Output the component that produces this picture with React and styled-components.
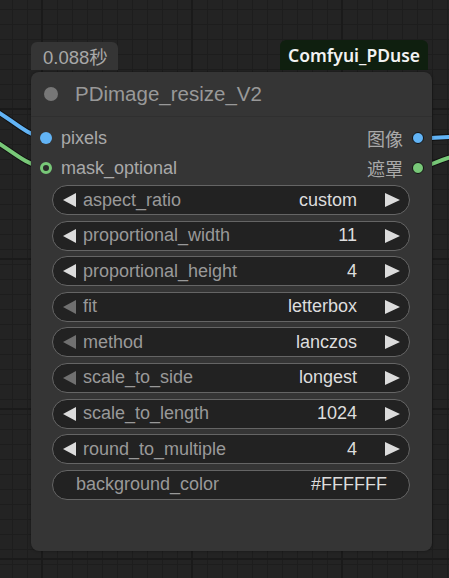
import React from 'react';
import styled, { createGlobalStyle } from 'styled-components';

const GlobalStyle = createGlobalStyle`
  html, body {
    margin: 0;
    padding: 0;
    background-color: #222;
  }
  * {
    box-sizing: border-box;
  }
`;

const Canvas = styled.div`
  position: relative;
  width: 449px;
  height: 578px;
  overflow: hidden;
  padding: 40px 17px 0 31px;
  font-family: "Liberation Sans", Arial, sans-serif;
  background-color: #232323;
  background-image:
    linear-gradient(to right, #1a1a1a 2px, transparent 2px),
    linear-gradient(to bottom, #1a1a1a 2px, transparent 2px),
    linear-gradient(to right, #1d1d1d 1px, transparent 1px),
    linear-gradient(to bottom, #1d1d1d 1px, transparent 1px);
  background-size: 150px 150px, 150px 150px, 15px 15px, 15px 15px;
  background-position: 41px 0, 0 108px, 12px 0, 0 9px;
`;

const Wires = styled.svg`
  position: absolute;
  left: 0;
  top: 0;
  width: 449px;
  height: 578px;
  pointer-events: none;
`;

const BadgeRow = styled.div`
  position: relative;
  display: flex;
  justify-content: space-between;
  align-items: flex-end;
  width: 401px;
  padding-right: 4px;
`;

const TimeBadge = styled.div`
  height: 28px;
  padding: 0 10px 0 12px;
  display: flex;
  align-items: center;
  background: #353535;
  border-radius: 6px 6px 0 0;
  color: #a8a8a8;
  font-size: 18.5px;
  font-family: "Liberation Sans", "Noto Sans CJK SC", sans-serif;
`;

const PackBadge = styled.div`
  height: 30px;
  padding: 0 8px;
  display: flex;
  align-items: center;
  background: #0f1f0f;
  border-radius: 6px 6px 0 0;
  color: #f2f2f2;
  font-size: 17.5px;
  font-weight: 600;
  font-family: "Noto Sans", sans-serif;
`;

const Node = styled.div`
  position: relative;
  margin-top: 2px;
  width: 401px;
  height: 479px;
  background: #353535;
  border-radius: 8px;
  box-shadow: 0 0 3px rgba(0, 0, 0, 0.4);
`;

const Title = styled.div`
  height: 45px;
  display: flex;
  align-items: center;
  gap: 17px;
  padding-left: 13px;
  border-bottom: 1px solid #2f2f2f;
  color: #999;
  font-size: 20.5px;
`;

const TitleDot = styled.span`
  width: 14px;
  height: 14px;
  border-radius: 50%;
  background: #777;
`;

const Slots = styled.div`
  padding: 6px 0 2px;
`;

const SlotRow = styled.div`
  height: 30px;
  display: flex;
  align-items: center;
  justify-content: space-between;
  padding: 0 8px 0 9px;
  color: #a9a9a9;
  font-size: 18px;
  font-family: "Liberation Sans", "Noto Sans CJK SC", sans-serif;
`;

const SlotSide = styled.div`
  display: flex;
  align-items: center;
  gap: 9px;
`;

const SlotDot = styled.span`
  width: 12px;
  height: 12px;
  border-radius: 50%;
  background: ${({ ring, color }) => (ring ? '#2a2a2a' : color)};
  border: ${({ ring, color, outlined }) =>
    ring ? `3px solid ${color}` : outlined ? '1px solid #111' : 'none'};
`;

const WidgetList = styled.div`
  display: flex;
  flex-direction: column;
  gap: 5.6px;
  padding: 0 22px 0 21px;
`;

const Widget = styled.div`
  height: 30px;
  display: flex;
  align-items: center;
  background: #222;
  border: 1px solid #656565;
  border-radius: 15px;
  padding: ${({ plain }) => (plain ? '0 22px 0 23px' : '0 9px 0 10px')};
  font-size: 18px;
`;

const Arrow = styled.span`
  width: 0;
  height: 0;
  border-top: 7px solid transparent;
  border-bottom: 7px solid transparent;
  ${({ dir, dim }) =>
    dir === 'left'
      ? `border-right: 13px solid ${dim ? '#707070' : '#dcdcdc'};`
      : `border-left: 15px solid #dcdcdc;`}
`;

const Label = styled.span`
  flex: 1;
  margin-left: ${({ plain }) => (plain ? '0' : '7px')};
  color: #999;
`;

const Value = styled.span`
  color: #ddd;
  margin-right: ${({ plain }) => (plain ? '0' : '28px')};
`;

const widgets = [
  { label: 'aspect_ratio', value: 'custom' },
  { label: 'proportional_width', value: '11' },
  { label: 'proportional_height', value: '4' },
  { label: 'fit', value: 'letterbox', dim: true },
  { label: 'method', value: 'lanczos', dim: true },
  { label: 'scale_to_side', value: 'longest', dim: true },
  { label: 'scale_to_length', value: '1024' },
  { label: 'round_to_multiple', value: '4' },
];

const Wire = ({ d, color }) => (
  <g fill="none" strokeLinecap="round">
    <path d={d} stroke="#111" strokeWidth="6" />
    <path d={d} stroke={color} strokeWidth="4" />
  </g>
);

const App = () => (
  <>
    <GlobalStyle />
    <Canvas>
      <Wires viewBox="0 0 449 578">
        <Wire d="M -20 102 C 10 116, 20 132, 45 139" color="#62b4f6" />
        <Wire d="M -20 132 C 10 148, 20 162, 45 169" color="#78c878" />
        <Wire d="M 418 139 C 430 138, 440 137, 470 136" color="#62b4f6" />
        <Wire d="M 418 169 C 432 165, 442 158, 470 152" color="#78c878" />
      </Wires>
      <BadgeRow>
        <TimeBadge>0.088秒</TimeBadge>
        <PackBadge>Comfyui_PDuse</PackBadge>
      </BadgeRow>
      <Node>
        <Title>
          <TitleDot />
          PDimage_resize_V2
        </Title>
        <Slots>
          <SlotRow>
            <SlotSide>
              <SlotDot color="#62b4f6" />
              pixels
            </SlotSide>
            <SlotSide>
              图像
              <SlotDot color="#62b4f6" outlined />
            </SlotSide>
          </SlotRow>
          <SlotRow>
            <SlotSide>
              <SlotDot color="#78c878" ring />
              mask_optional
            </SlotSide>
            <SlotSide>
              遮罩
              <SlotDot color="#78c878" outlined />
            </SlotSide>
          </SlotRow>
        </Slots>
        <WidgetList>
          {widgets.map((w) => (
            <Widget key={w.label}>
              <Arrow dir="left" dim={w.dim} />
              <Label>{w.label}</Label>
              <Value>{w.value}</Value>
              <Arrow dir="right" />
            </Widget>
          ))}
          <Widget plain>
            <Label plain>background_color</Label>
            <Value plain>#FFFFFF</Value>
          </Widget>
        </WidgetList>
      </Node>
    </Canvas>
  </>
);

export default App;
